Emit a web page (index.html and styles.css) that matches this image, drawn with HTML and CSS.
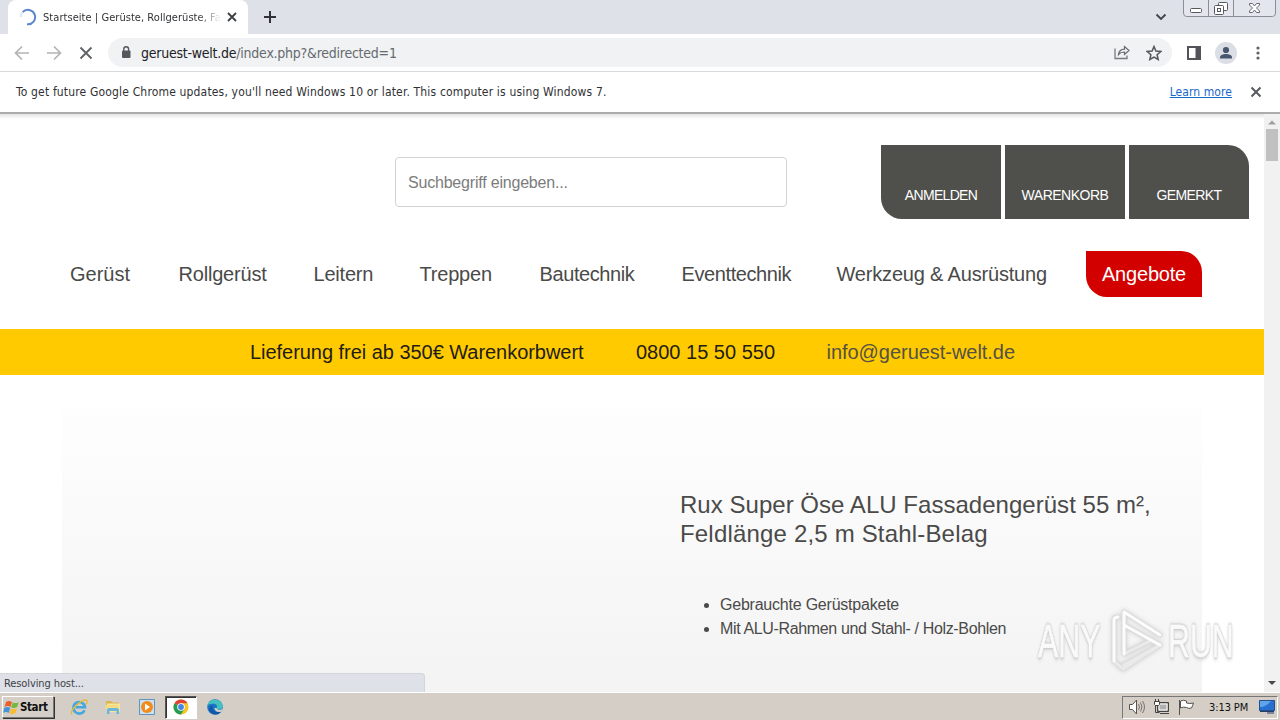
FILE: index.html
```html
<!DOCTYPE html>
<html lang="de">
<head>
<meta charset="utf-8">
<title>Startseite | Gerüste, Rollgerüste, Fa</title>
<link rel="stylesheet" href="styles.css">
</head>
<body>
<div class="screen">
  <header class="tabstrip">
    <div class="tab">
      <svg class="spinner" width="18" height="18" viewBox="0 0 18 18"><path d="M3.600 4.200A7.200 7.200 0 1 1 8 16.200" fill="none" stroke="#5b86cc" stroke-width="2"/><path d="M1.800 9A7.200 7.200 0 0 1 3.600 4.200" fill="none" stroke="#dbe6f7" stroke-width="2"/></svg>
      <span class="tab-title">Startseite | Gerüste, Rollgerüste, Fa</span>
      <svg class="tab-close" width="10" height="10" viewBox="0 0 10 10"><path d="M1 1l8 8M9 1l-8 8" stroke="#3c4043" stroke-width="1.800"/></svg>
    </div>
    <svg class="new-tab" width="12" height="12" viewBox="0 0 12 12"><path d="M6 0v12M0 6h12" stroke="#303236" stroke-width="2"/></svg>
    <svg class="tab-search" width="12" height="8" viewBox="0 0 12 8"><path d="M1.500 1.500L6 6l4.500-4.500" fill="none" stroke="#43464a" stroke-width="1.900"/></svg>
    <svg class="caption" width="94" height="17" viewBox="0 0 94 17"><path d="M.5 0v13q0 3.500 3 3.500h86q3 0 3-3.500V0M25.500 0v16.500M50.500 0v16.500" fill="#e3e6ec" stroke="#8b8e96"/><rect x="7.500" y="8.500" width="11" height="4" rx="1" fill="#fff" stroke="#565960"/><rect x="35.500" y="2.500" width="9" height="8" rx="1" fill="#fff" stroke="#565960"/><rect x="31.500" y="5.500" width="9" height="9" rx="1" fill="#fff" stroke="#565960"/><rect x="34.500" y="8.500" width="3" height="3" fill="#fff" stroke="#565960"/><path d="M66.500 3.500h3l2 2.500 2-2.500h3v1.500l-3 3 3 3v1.500h-3l-2-2.500-2 2.500h-3V11l3-3-3-3z" fill="#fff" stroke="#666971"/></svg>
  </header>

  <div class="toolbar">
    <svg class="nav-icons" width="94" height="16" viewBox="0 0 94 16"><path d="M15 8H1.500M8 1.500L1.500 8 8 14.500M33 8h13.500M40 1.500L46.500 8 40 14.500" fill="none" stroke="#b4b4b4" stroke-width="1.700"/><path d="M66.500 2.500l11 11M77.500 2.500l-11 11" stroke="#5f6368" stroke-width="1.900"/></svg>
    <div class="omnibox">
      <svg class="lock" width="10" height="13" viewBox="0 0 10 13"><rect x="1" y="4.500" width="8.500" height="7.500" rx="1" fill="#54575b"/><path d="M2.800 5V3.200a2.400 2.400 0 0 1 4.800 0V5" fill="none" stroke="#54575b" stroke-width="1.400"/></svg>
      <span class="url"><span class="host">geruest-welt.de</span><span class="path">/index.php?&amp;redirected=1</span></span>
      <svg class="share" width="16" height="15" viewBox="0 0 16 15"><path d="M1 3.500v10h12v-3" fill="none" stroke="#777a7e" stroke-width="1.300"/><path d="M4.500 9.500C5 6 7.500 4.300 10.500 4.200V1.500L15 5.500l-4.500 4V7C8 6.900 6 7.700 4.500 9.500z" fill="none" stroke="#66696d" stroke-width="1.200"/></svg>
      <svg class="star" width="16" height="16" viewBox="0 0 16 16"><path d="M8 1.500l1.900 4.600 4.900.4-3.700 3.200 1.100 4.800L8 12l-4.200 2.500 1.100-4.800L1.200 6.500l4.900-.4z" fill="none" stroke="#55585c" stroke-width="1.500"/></svg>
    </div>
    <svg class="panel-icon" width="14" height="14" viewBox="0 0 14 14"><path d="M1 1h12v12H1z" fill="#fff" stroke="#55535a" stroke-width="2"/><path d="M8.500 1H13v12H8.500z" fill="#55535a"/></svg>
    <svg class="avatar" width="22" height="22" viewBox="0 0 22 22"><circle cx="11" cy="11" r="11" fill="#dbdee4"/><circle cx="11" cy="8" r="3.100" fill="#49566f"/><path d="M5 16.500v-1.300c0-2 3.400-3.200 6-3.200s6 1.200 6 3.200v1.300z" fill="#49566f"/></svg>
    <svg class="menu-dots" width="4" height="14" viewBox="0 0 4 14"><g fill="#5f6368"><circle cx="2" cy="2" r="1.600"/><circle cx="2" cy="7" r="1.600"/><circle cx="2" cy="12" r="1.600"/></g></svg>
  </div>

  <div class="infobar">
    <span class="notice">To get future Google Chrome updates, you'll need Windows 10 or later. This computer is using Windows 7.</span>
    <a class="learn">Learn more</a>
    <svg class="info-close" width="12" height="12" viewBox="0 0 12 12"><path d="M1.500 1.500l9 9M10.500 1.500l-9 9" stroke="#55585c" stroke-width="1.900"/></svg>
  </div>

  <div class="viewport">
    <main class="page">
      <div class="top">
        <div class="search">Suchbegriff eingeben...</div>
        <div class="account">
          <a class="acc acc-first"><span class="a1">ANMELDEN</span></a>
          <a class="acc"><span class="a2">WARENKORB</span></a>
          <a class="acc acc-last"><span class="a3">GEMERKT</span></a>
        </div>
      </div>
      <nav class="nav">
        <a class="n1">Gerüst</a><a class="n2">Rollgerüst</a><a class="n3">Leitern</a><a class="n4">Treppen</a><a class="n5">Bautechnik</a><a class="n6">Eventtechnik</a><a class="n7">Werkzeug &amp; Ausrüstung</a><a class="offers">Angebote</a>
      </nav>
      <div class="usp"><span class="u1">Lieferung frei ab 350€ Warenkorbwert</span><span class="u2">0800 15 50 550</span><a class="u3">info@geruest-welt.de</a></div>
      <section class="hero">
        <h1><span class="h1a">Rux Super Öse ALU Fassadengerüst 55 m²,</span><br><span class="h1b">Feldlänge 2,5 m Stahl-Belag</span></h1>
        <ul><li><span class="l1">Gebrauchte Gerüstpakete</span></li><li><span class="l2">Mit ALU-Rahmen und Stahl- / Holz-Bohlen</span></li></ul>
      </section>
    </main>
    <div class="scrollbar">
      <svg width="16" height="15" viewBox="0 0 16 15"><path d="M4 10.500l4-4 4 4z" fill="#a0a0a0"/></svg>
      <div class="thumb"></div>
      <svg width="16" height="16" viewBox="0 0 16 16"><path d="M4 5h8l-4 4z" fill="#484848"/></svg>
    </div>
    <div class="status"><span>Resolving host...</span></div>
    <div class="watermark">
      <span class="wm-any">ANY</span>
      <svg class="wm-logo" width="60" height="66" viewBox="0 0 60 66"><g fill="none" stroke-linejoin="round" stroke-linecap="round"><path d="M6 53V12q0-3 4-3M16 46V4l36 23M16 17l36 20L16 57M16 17v29l28-14M6 53l9 8 37-24" stroke="#dcdcdc" stroke-width="5"/><path d="M16 46l28-14M6 53l9 8 37-24L16 57" stroke="#eaeaea" stroke-width="3"/><path d="M6 53V12q0-3 4-3M16 46V4l36 23M16 17l36 20M16 17v29" stroke="#fcfcfc" stroke-width="3"/></g></svg>
      <span class="wm-run">RUN</span>
    </div>
  </div>

  <footer class="taskbar">
    <div class="start">
      <svg width="17" height="17" viewBox="0 0 17 17"><path d="M3 3q3-2 6 0L7.500 8q-3-2-6 0z" fill="#e8602c"/><path d="M9.700 3.400q3 1.500 6-.2L14.200 8q-3 2-6 .4z" fill="#77b843"/><path d="M1.200 9q3-2 6 0l-1.500 5q-3-2-5.500 0z" fill="#4394d8"/><path d="M8 9.400q3 1.500 6-.2L12.500 14q-3 2-6 .4z" fill="#f6bd31"/></svg>
      <b>Start</b>
    </div>
    <div class="quick">
      <svg class="q1" width="18" height="18" viewBox="0 0 18 18"><path d="M14.500 12.200A5.800 5.800 0 1 1 15 9.300H5.500" fill="none" stroke="#42a9df" stroke-width="2.600"/><path d="M2 16.500C-1 13 10 2 16 2c2 .5 1 3 0 4.500" fill="none" stroke="#e5b83c" stroke-width="1.300"/></svg>
      <svg class="q2" width="18" height="18" viewBox="0 0 18 18"><path d="M2 3h5l1.500 1.500H15V9H2z" fill="#dcb451"/><path d="M3 5.500h13V14H3z" fill="#f8e59c"/><path d="M1.500 7h13v4h-13z" fill="#f5dc83"/><path d="M3 16v-4q0-2 2-2h8q2 0 2 2v4h-2.500v-3h-7v3z" fill="#6bb8dc"/></svg>
      <svg class="q3" width="18" height="18" viewBox="0 0 18 18"><path d="M1.500 1.500h15v15h-15z" fill="#c9e1f1" stroke="#5e94bd"/><circle cx="9" cy="9" r="6" fill="#f38b1c"/><path d="M7 5.500l5 3.500-5 3.500z" fill="#fff"/></svg>
      <span class="active-task"><svg width="16" height="16" viewBox="0 0 16 16"><circle cx="8" cy="8" r="7.500" fill="#f6c524"/><path d="M8 8L1.500 4.250A7.500 7.500 0 0 1 14.500 4.250H8z" fill="#dc4437"/><path d="M8 8L1.500 4.250A7.500 7.500 0 0 0 8 15.500L11.200 10z" fill="#259c55"/><circle cx="8" cy="8" r="3.800" fill="#fff"/><circle cx="8" cy="8" r="2.900" fill="#4484e8"/></svg></span>
      <svg class="q5" width="18" height="18" viewBox="0 0 18 18"><circle cx="9" cy="9" r="7.800" fill="#1976c5"/><path d="M1.500 7C3 0 16 0 16.800 8c0 4-5.800 4-6.300 2 2-3-2-6-9-3z" fill="#46bfc1"/><path d="M7 7.500c-2 4 2 8 8 6-2 4-8 4-11 0-2-3 0-6 3-6z" fill="#1555a5"/><path d="M10.500 10c.5 2 4 2.500 6 .5l-1 3c-4 1.500-7-.5-7-3.500z" fill="#d6d0c8"/></svg>
    </div>
    <div class="tray">
      <svg width="18" height="18" viewBox="0 0 18 18"><path d="M1.500 6.500h3l4-4.500v14l-4-4.500h-3z" fill="#fff" stroke="#56534e"/><path d="M10.500 6q2 3 0 6M12.500 4.500q3 4.500 0 9M14.500 3q4 6 0 12" fill="none" stroke="#77736d"/></svg>
      <svg class="net" width="18" height="18" viewBox="0 0 18 18"><path d="M4.500 4.500h11v9h-11z" fill="#999" stroke="#45433f"/><path d="M6 6h8v6H6z" fill="#b0b0b0" stroke="#fff"/><path d="M7 15.500h9M2.500 7v7.500h4" stroke="#45433f" fill="none"/><path d="M1.500 3.500h5v3l-1 1h-3l-1-1zM2.500 1v3M5.500 1v3" fill="#fff" stroke="#45433f"/></svg>
      <svg class="flag" width="18" height="18" viewBox="0 0 18 18"><path d="M2.500 17V2" stroke="#55524d"/><path d="M3.500 3q3-1.500 6 0v2q3 1 7 0-1 3-2 5-3 1-5-.5-3-1-6 .5z" fill="#fff" stroke="#55524d"/></svg>
      <span class="clock">3:13 PM</span>
      <svg class="desk" width="16" height="14" viewBox="0 0 16 14"><path d="M.5.500h15v10H.5z" fill="#2770cf" stroke="#24508e"/><path d="M1 1h11Q7 7 1 7z" fill="#60a5eb"/><path d="M1 11.500h14M8 13h7" stroke="#243f69"/></svg>
    </div>
  </footer>
</div>
</body>
</html>
```
FILE: styles.css
```css
* { box-sizing: border-box; }
body { margin: 0; width: 1280px; height: 720px; overflow: hidden; background: #fff; }
svg { display: block; flex: none; }
span { white-space: nowrap; }
.screen { width: 1280px; height: 720px; display: flex; flex-direction: column; font-family: "DejaVu Sans Condensed", "DejaVu Sans", sans-serif; font-stretch: condensed; }
.tabstrip { height: 34px; background: #dee1e8; display: flex; align-items: flex-start; flex: none; padding-left: 8px; }
.tab { width: 240px; height: 34px; background: #fff; border-radius: 8px 8px 0 0; display: flex; align-items: center; padding-left: 11px; flex: none; }
.tab-title { margin-left: 6px; width: 177px; font-size: 11px; letter-spacing: .05px; color: #303235; -webkit-mask-image: linear-gradient(90deg, #000 155px, transparent 178px); }
.tab-close { margin-left: 7px; }
.new-tab { margin: 11px 0 0 16px; }
.tab-search { margin: 13px 16px 0 auto; }
.caption { margin-right: 3px; }
.toolbar { height: 38px; flex: none; border-bottom: 1px solid #d8d9dc; display: flex; align-items: center; padding-left: 14px; }
.omnibox { width: 1064px; height: 29px; background: #f0f2f4; border-radius: 15px; display: flex; align-items: center; padding: 0 10px 0 13px; }
.url { margin-left: 10px; font-size: 14px; letter-spacing: -.24px; }
.host { color: #202124; }
.path { color: #666a6e; }
.share { margin-left: auto; }
.star { margin-left: 16px; }
.panel-icon { margin-left: 15px; }
.avatar { margin-left: 14px; }
.menu-dots { margin-left: 19px; }
.infobar { height: 40px; flex: none; display: flex; align-items: center; padding-left: 16px; font-size: 12px; color: #303134; }
.notice { letter-spacing: .165px; }
.learn { margin-left: auto; letter-spacing: .08px; color: #1967c8; text-decoration: underline; }
.info-close { margin: 0 18px 0 18px; }
.viewport { height: 580px; flex: none; display: flex; position: relative; border-top: 2px solid #aaacae; overflow: hidden; }
.page { width: 1264px; font-family: "Liberation Sans", Arial, sans-serif; color: #4a4a49; background: linear-gradient(#e4e4e4, #fff 5px); }
.top { height: 137px; padding: 31px 15px 0 395px; display: flex; justify-content: space-between; }
.search { width: 392px; height: 50px; margin-top: 12px; border: 1px solid #d2d2d2; border-radius: 4px; padding-left: 12px; line-height: 49px; font-size: 16px; letter-spacing: -.2px; color: #7c7c7c; }
.account { display: flex; gap: 4px; }
.acc { width: 120px; height: 74px; background: #4f4f4b; color: #fff; font-size: 14px; line-height: 16px; text-align: center; padding-top: 42px; }
.acc-first { border-radius: 0 0 0 21px; }
.acc-last { border-radius: 0 21px 0 0; }
.a1 { letter-spacing: -.68px; } .a2 { letter-spacing: -.5px; } .a3 { letter-spacing: -.6px; }
.nav { height: 78px; display: flex; padding-left: 70px; font-size: 20px; line-height: 46px; white-space: nowrap; }
.nav a { flex: none; }
.n1 { width: 108.500px; } .n2 { width: 135px; letter-spacing: -.2px; } .n3 { width: 106px; letter-spacing: -.2px; } .n4 { width: 120px; letter-spacing: -.2px; } .n5 { width: 142px; letter-spacing: -.4px; } .n6 { width: 155px; letter-spacing: -.4px; } .n7 { width: 249.500px; letter-spacing: -.18px; }
.offers { width: 116px; height: 46px; background: #d30000; color: #fff; text-align: center; letter-spacing: -.2px; border-radius: 0 21px 0 21px; }
.usp { height: 46px; background: #ffcb00; display: flex; padding-left: 250px; font-size: 20px; line-height: 46px; color: #241b15; }
.u1 { width: 386px; letter-spacing: -.04px; } .u2 { width: 190.500px; } .u3 { color: #565143; letter-spacing: -.04px; }
.hero { width: 1140px; height: 400px; margin: 32px 0 0 62px; padding: 83px 0 0 618px; background: linear-gradient(#fefefe, #f3f3f3 290px); }
h1 { margin: 0; font-weight: 400; font-size: 24px; line-height: 29px; }
.h1a { letter-spacing: .03px; } .h1b { letter-spacing: .18px; }
ul { margin: 45px 0 0; padding-left: 40px; font-size: 16px; line-height: 24px; }
.l1 { letter-spacing: -.22px; } .l2 { letter-spacing: -.35px; }
.scrollbar { width: 16px; background: #f1f1f1; display: flex; flex-direction: column; }
.thumb { width: 12px; height: 32px; margin: 0 2px auto; background: #c0c0c0; }
.status { position: absolute; left: 0; bottom: 0; width: 425px; height: 19px; background: #dee1e8; border: 1px solid #d2d5da; border-left: 0; border-bottom: 0; border-radius: 0 4px 0 0; padding-left: 4px; font-size: 11px; letter-spacing: -.1px; line-height: 19px; color: #3c4043; }
.watermark { position: absolute; left: 1038px; top: 494px; width: 200px; height: 66px; display: flex; align-items: center; font: 46px/66px "Liberation Sans", Arial, sans-serif; }
.wm-any, .wm-run { display: block; transform: scaleX(.66); transform-origin: left; width: 66px; color: #fafafa; -webkit-text-stroke: 1px #f8f8f8; filter: drop-shadow(0 0 1px #b5b5b5) drop-shadow(0 1px 2px #ccc); }
.wm-logo { margin-left: 4px; filter: drop-shadow(0 0 2px #ccc); }
.wm-run { width: 66px; }
.taskbar { height: 28px; flex: none; background: #d5cec6; border-top: 1px solid #fff; display: flex; align-items: center; padding: 1px 2px 0; color: #111; }
.start { width: 52px; height: 22px; display: flex; align-items: center; border: 1px solid; border-color: #fff #777 #777 #fff; box-shadow: 1px 1px #333; font-size: 11.500px; letter-spacing: -.4px; }
.start b { margin-left: 0; }
.quick { display: flex; align-items: center; }
.q1 { margin-left: 16px; } .q2 { margin-left: 16px; } .q3 { margin-left: 16px; }
.active-task { width: 32px; height: 23px; margin-left: 9px; border: 1px solid; border-color: #555 #fff #fff #555; box-shadow: inset 1px 1px #333; background: #fff; display: flex; align-items: center; justify-content: center; }
.q5 { margin-left: 9px; }
.tray { margin-left: auto; width: 156px; height: 23px; border: 1px solid; border-color: #777 #fff #fff #777; display: flex; align-items: center; padding-left: 5px; }
.net { margin-left: 7px; } .flag { margin-left: 6px; }
.clock { margin-left: 14px; width: 41px; font-size: 11px; letter-spacing: -.1px; }
.desk { margin-left: 9px; }
```
